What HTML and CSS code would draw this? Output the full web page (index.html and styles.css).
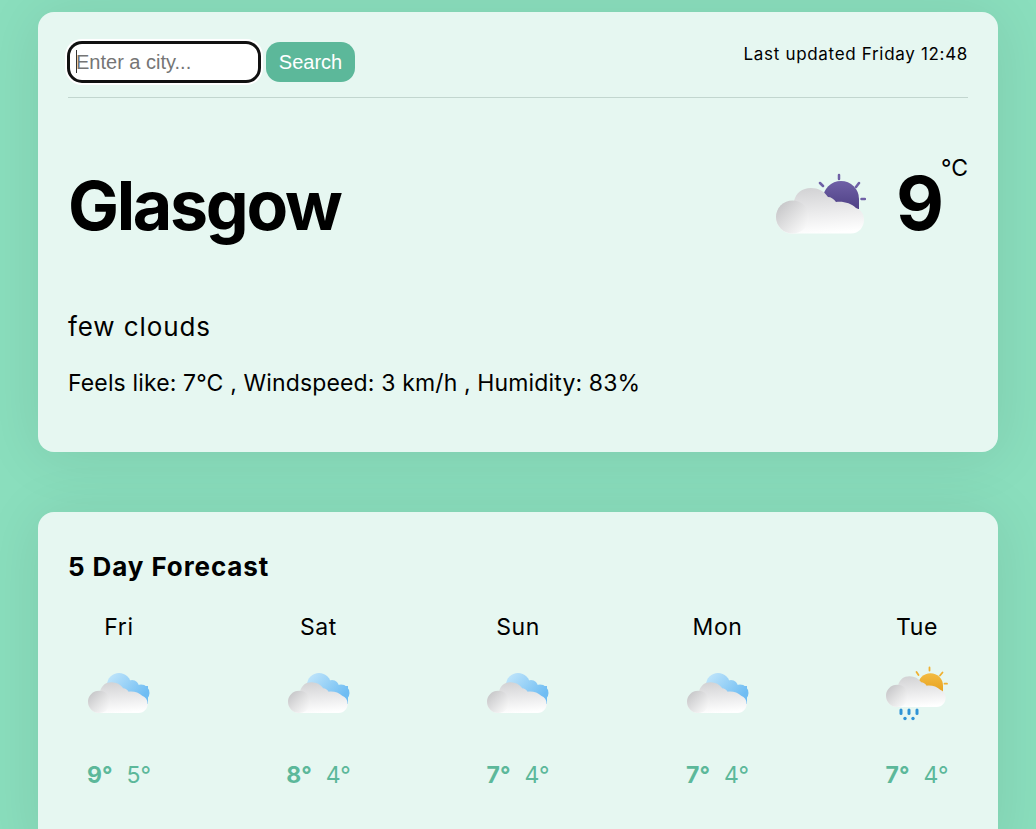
FILE: index.html
```html
<!DOCTYPE html>
<html lang="en">
<head>
<meta charset="utf-8">
<title>Weather</title>
<link rel="stylesheet" href="styles.css">
</head>
<body>
<svg class="defs" width="0" height="0" aria-hidden="true">
  <defs>
    <linearGradient id="cloudBody" x1="0.35" y1="0" x2="0.5" y2="1">
      <stop offset="0" stop-color="#d2d2d4"/><stop offset="0.55" stop-color="#ebebec"/><stop offset="1" stop-color="#ffffff"/>
    </linearGradient>
    <linearGradient id="puff" x1="0.1" y1="0.1" x2="0.9" y2="0.9">
      <stop offset="0" stop-color="#c6c6c8"/><stop offset="1" stop-color="#fafafa"/>
    </linearGradient>
    <linearGradient id="purple" x1="0" y1="0" x2="0" y2="1">
      <stop offset="0" stop-color="#6f60a6"/><stop offset="1" stop-color="#4f4186"/>
    </linearGradient>
    <linearGradient id="amber" x1="0" y1="0" x2="0" y2="1">
      <stop offset="0" stop-color="#f3bb42"/><stop offset="1" stop-color="#e8a21e"/>
    </linearGradient>
    <linearGradient id="sky" gradientUnits="userSpaceOnUse" x1="20" y1="6" x2="52" y2="34">
      <stop offset="0" stop-color="#c6e8fb"/><stop offset="1" stop-color="#6fbdf3"/>
    </linearGradient>
    <symbol id="cloud" viewBox="0 0 90 62">
      <path fill="url(#cloudBody)" d="M16 60.500 C7 60.500 0 53 0 44 C0 35 8 28 18 28 C20 20 26 15 35 15 C42 15 48 18 52 24 C55 24 58 26 60 29 C67 28 75 30 80 35 C85 37 88 41 88 47 C88 54 83 60.500 75 60.500 Z"/>
      <circle cx="16.500" cy="44" r="16.500" fill="url(#puff)"/>
    </symbol>
    <symbol id="few-clouds" viewBox="0 0 62 64">
      <g fill="url(#sky)">
        <circle cx="31" cy="19" r="12"/>
        <circle cx="44" cy="21" r="7"/>
        <circle cx="53" cy="27" r="8.500"/>
        <rect x="20" y="20" width="40" height="18"/>
      </g>
      <use href="#cloud" x="0" y="6" width="61" height="42"/>
    </symbol>
  </defs>
</svg>

<main class="page">
  <section class="card current">
    <header class="topbar">
      <form class="search">
        <label class="search-field">
          <input class="search-input" type="text" placeholder="Enter a city..." autofocus>
          <span class="caret"></span>
        </label>
        <button class="search-button" type="button">Search</button>
      </form>
      <p class="updated">Last updated Friday 12:48</p>
    </header>

    <div class="headline">
      <h1 class="city">Glasgow</h1>
      <div class="now">
        <svg class="now-icon" viewBox="0 0 90 62" aria-hidden="true">
          <g stroke="#6f60a6" stroke-width="2.500" stroke-linecap="round">
            <path d="M63 2V6M44 10L47 13M83 10L80 14M85.500 26H89"/>
          </g>
          <path fill="url(#purple)" d="M47 26 A18 18 0 0 1 83 26 V36 H47 Z"/>
          <use href="#cloud" x="0" y="0" width="90" height="62"/>
        </svg>
        <span class="temp">9</span>
        <span class="unit">°C</span>
      </div>
    </div>

    <p class="desc">few clouds</p>
    <p class="stats">Feels like: 7°C , Windspeed: 3 km/h , Humidity: 83%</p>
  </section>

  <section class="card forecast">
    <h2 class="forecast-title">5 Day Forecast</h2>
    <div class="days">
      <div class="day">
        <span class="day-name">Fri</span>
        <svg class="day-icon" viewBox="0 0 62 64" aria-hidden="true"><use href="#few-clouds"/></svg>
        <span class="range"><b>9°</b><span>5°</span></span>
      </div>
      <div class="day">
        <span class="day-name">Sat</span>
        <svg class="day-icon" viewBox="0 0 62 64" aria-hidden="true"><use href="#few-clouds"/></svg>
        <span class="range"><b>8°</b><span>4°</span></span>
      </div>
      <div class="day">
        <span class="day-name">Sun</span>
        <svg class="day-icon" viewBox="0 0 62 64" aria-hidden="true"><use href="#few-clouds"/></svg>
        <span class="range"><b>7°</b><span>4°</span></span>
      </div>
      <div class="day">
        <span class="day-name">Mon</span>
        <svg class="day-icon" viewBox="0 0 62 64" aria-hidden="true"><use href="#few-clouds"/></svg>
        <span class="range"><b>7°</b><span>4°</span></span>
      </div>
      <div class="day">
        <span class="day-name">Tue</span>
        <svg class="day-icon" viewBox="0 0 62 64" aria-hidden="true">
          <g stroke="#f0b030" stroke-width="1.800" stroke-linecap="round">
            <path d="M43.500 1.500V4.500M30.500 6L32.500 9M56.500 6.500L54 9.500M58.500 17.700H61"/>
          </g>
          <path fill="url(#amber)" d="M32 19.700 A12.500 12.500 0 0 1 57 19.700 V26 H32 Z"/>
          <use href="#cloud" x="0" y="0" width="61" height="42"/>
          <g fill="#2e93d6">
            <rect x="13.500" y="42.500" width="3" height="6.500" rx="1.500"/>
            <rect x="21.500" y="42.500" width="3" height="6.500" rx="1.500"/>
            <rect x="29.500" y="42.500" width="3" height="6.500" rx="1.500"/>
            <circle cx="19" cy="52.500" r="1.700"/>
            <circle cx="27" cy="52.500" r="1.700"/>
          </g>
        </svg>
        <span class="range"><b>7°</b><span>4°</span></span>
      </div>
    </div>
  </section>
</main>
</body>
</html>
```
FILE: styles.css
```css
* { box-sizing: border-box; }

html, body { margin: 0; }

body {
  background: #8adebd;
  font-family: "Inter", "Liberation Sans", sans-serif;
  color: #000;
}

.defs { display: block; height: 0; }

.page {
  width: 960px;
  margin: 0 auto;
  padding-top: 12px;
  display: flex;
  flex-direction: column;
  gap: 60px;
}

.card {
  background: #e6f7f1;
  border-radius: 16px;
  padding: 30px;
  box-shadow: 0 4px 60px rgba(0, 0, 0, 0.09);
}

.current { height: 440px; }
.forecast { height: 340px; }

.topbar {
  display: flex;
  justify-content: space-between;
  align-items: flex-start;
  height: 56px;
  border-bottom: 1px solid #c2d6cf;
}

.search { display: flex; gap: 6px; }

.search-field { position: relative; display: block; }

.search-input {
  display: block;
  width: 192px;
  height: 40px;
  border: 2px solid #111;
  border-radius: 14px;
  padding: 0 6px;
  background: #fff;
  box-shadow: 0 0 0 1px #111, 0 0 0 3px #fff;
  outline: none;
  font: 20px "Liberation Sans", Arial, sans-serif;
}

.caret {
  position: absolute;
  left: 8px;
  top: 8px;
  width: 1px;
  height: 23px;
  background: #333;
}

.search-button {
  width: 89px;
  height: 40px;
  border: 0;
  border-radius: 14px;
  background: #5cb89a;
  color: #fff;
  font: 20px "Liberation Sans", Arial, sans-serif;
}

.updated { margin: 2px 0 0; font-size: 17px; line-height: 20px; letter-spacing: 0.68px; }

.headline {
  display: flex;
  justify-content: space-between;
  align-items: center;
  height: 120px;
  margin-top: 47px;
}

.city { margin: 0; font-size: 68px; font-weight: 700; line-height: 1; letter-spacing: -2.3px; }

.now { display: flex; align-items: flex-start; }

.now-icon { width: 90px; height: 62px; margin: 8px 30px 0 0; }

.temp { font-size: 74px; font-weight: 700; line-height: 84px; margin-top: -4px; }

.unit { font-size: 23px; line-height: 28px; margin: -11px 0 0 -3px; }

.desc { margin: 46px 0 0; font-size: 26px; line-height: 32px; letter-spacing: 0.9px; }

.stats { margin: 26px 0 0; font-size: 23px; line-height: 28px; letter-spacing: 0.14px; }

.forecast-title { margin: 9px 0 0; font-size: 26px; font-weight: 700; line-height: 32px; letter-spacing: 0.9px; }

.days { display: flex; justify-content: space-between; margin-top: 30px; }

.day {
  width: 102px;
  display: flex;
  flex-direction: column;
  align-items: center;
}

.day-name { font-size: 23px; line-height: 28px; letter-spacing: 0.6px; }

.day-icon { width: 62px; height: 64px; margin-top: 25px; overflow: visible; }

.range {
  display: flex;
  gap: 14px;
  margin-top: 30px;
  font-size: 23px;
  line-height: 30px;
  color: #5cb89a;
}

.range b { font-weight: 700; }
```
